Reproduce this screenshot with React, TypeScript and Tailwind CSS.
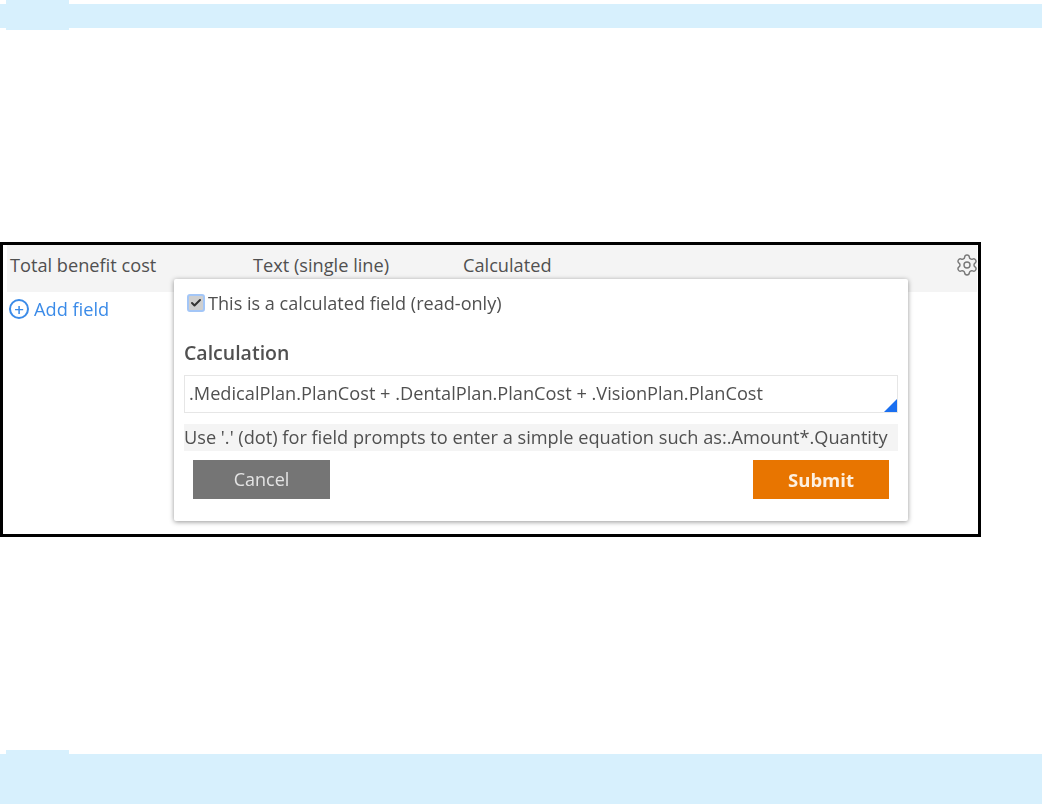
import React from "react";
import { Settings, Check } from "lucide-react";

function Band({ className, tabClassName }: { className: string; tabClassName: string }) {
  return (
    <div className={"relative bg-[#d7f0fd] " + className}>
      <div className={"absolute left-[6px] w-[63px] bg-[#d7f0fd] " + tabClassName} />
    </div>
  );
}

export default function App() {
  return (
    <div className="relative h-[804px] w-[1042px] overflow-hidden bg-white pt-1 font-['Open_Sans',sans-serif] text-[#505050]">
      <Band className="h-6" tabClassName="-top-1 h-[30px]" />

      <div className="relative mt-[214px] h-[295px] w-[981px] border-[3px] border-black bg-white">
        <div className="blur-[0.7px]">
          <div className="ml-1 flex h-[47px] w-[970px] items-start overflow-hidden bg-[#f4f4f4] pt-[8px] text-[18.2px] leading-[24px]">
            <span className="ml-[3px] w-[243px] whitespace-nowrap">Total benefit cost</span>
            <span className="w-[210px] whitespace-nowrap">Text (single line)</span>
            <span className="whitespace-nowrap">Calculated</span>
            <Settings className="ml-auto -mr-[2px] mt-[0px] text-[#777]" size={24} strokeWidth={1.4} />
          </div>
          <div className="ml-[6px] mt-[7px] flex items-center gap-[5px] text-[18.2px] leading-5 text-[#3b8be8]">
            <span className="flex h-5 w-5 items-center justify-center rounded-full border-2 border-[#3b8be8] text-[17px] font-semibold leading-none">+</span>
            <span>Add field</span>
          </div>
        </div>

        <div className="absolute left-[171px] top-[34px] h-[242px] w-[734px] rounded-[2px] bg-white px-[10px] pt-[14px] shadow-[0_1px_5px_rgba(0,0,0,0.42)] blur-[0.7px]">
          <div className="flex items-center gap-[3px] pl-[3px] text-[18.1px] leading-5">
            <span className="flex h-[18px] w-[18px] items-center justify-center rounded-[3px] border-2 border-[#a3c6f7] bg-[#cfcfcf] text-[#333]">
              <Check size={12} strokeWidth={4} />
            </span>
            <span>This is a calculated field (read-only)</span>
          </div>
          <div className="mt-[28px] text-[19.5px] font-semibold leading-6 text-[#505050]">Calculation</div>
          <div className="relative mt-[10px] flex h-[38px] w-[714px] items-center border border-[#e6e6e6] pl-[4px] text-[18.2px]">
            <span className="whitespace-nowrap">.MedicalPlan.PlanCost + .DentalPlan.PlanCost + .VisionPlan.PlanCost</span>
            <span className="absolute bottom-0 right-0 h-[13px] w-[13px] bg-[#1a6ff0] [clip-path:polygon(100%_0,100%_100%,0_100%)]" />
          </div>
          <div className="mt-[11px] flex h-[27px] w-[714px] items-center whitespace-nowrap bg-[#f4f4f4] text-[18.2px]">
            Use '.' (dot) for field prompts to enter a simple equation such as:.Amount*.Quantity
          </div>
          <div className="mt-[9px] flex justify-between pl-[9px] pr-[9px]">
            <button className="h-[39px] w-[137px] bg-[#757575] text-[18px] text-[#e4e4e4]">Cancel</button>
            <button className="h-[39px] w-[136px] bg-[#e87500] text-[18.5px] font-bold text-[#fdf0e0]">Submit</button>
          </div>
        </div>
      </div>

      <div className="mt-[217px]">
        <Band className="h-[50px]" tabClassName="-top-1 h-1" />
      </div>
    </div>
  );
}
